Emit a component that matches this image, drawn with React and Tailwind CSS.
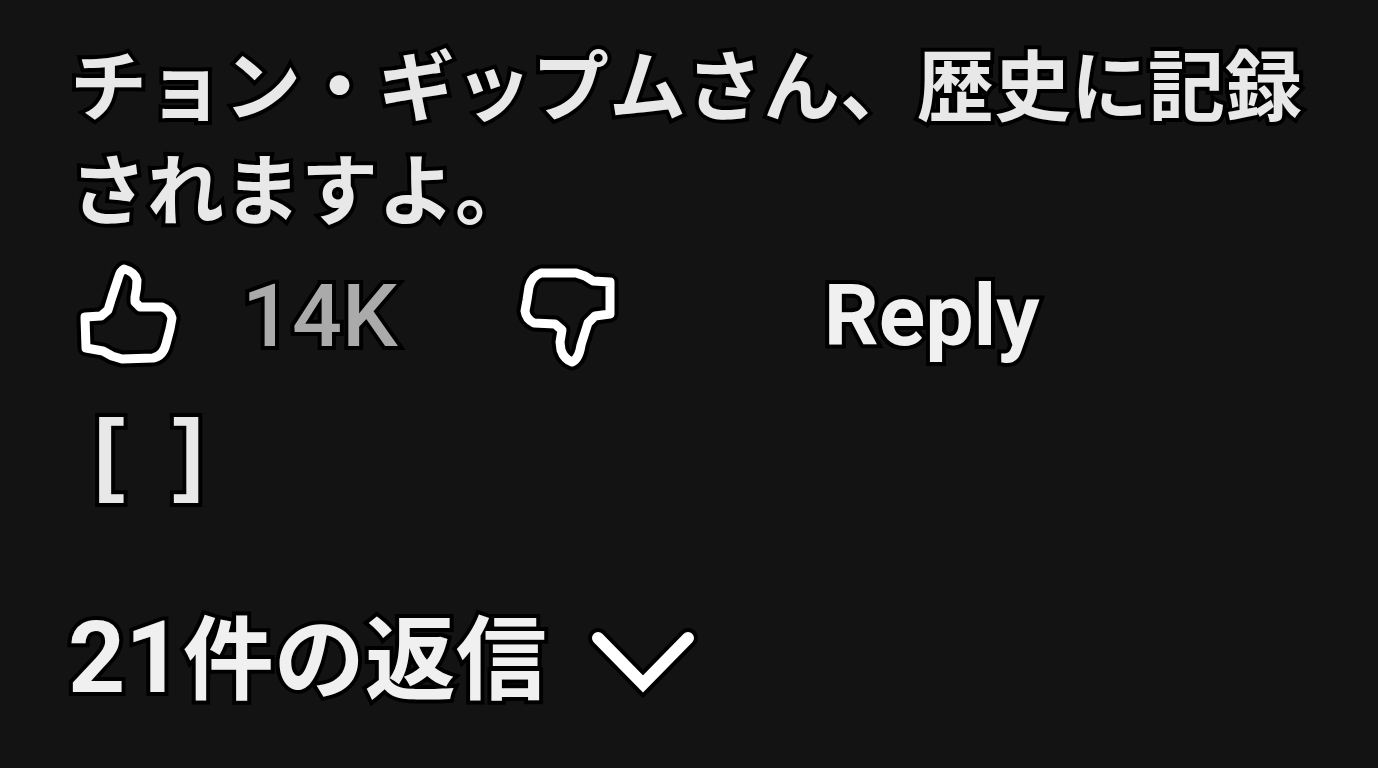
import React from "react";

const OUTLINE = "[-webkit-text-stroke:8px_black] [paint-order:stroke_fill]";

function OutlinedPath({ d, width = 9 }) {
  return (
    <>
      <path d={d} stroke="black" strokeWidth={width + 8} />
      <path d={d} stroke="white" strokeWidth={width} />
    </>
  );
}

function ThumbUpIcon() {
  return (
    <svg
      aria-hidden="true"
      className="h-28 w-26 overflow-visible"
      viewBox="0 0 104 112"
      fill="none"
      strokeLinejoin="round"
    >
      <OutlinedPath d="M11 57L27 56L34 50L38 37L44 19Q46 11 50 9Q61 12 63 20Q63 29 61 37L61 42L66 47L88 47Q96 50 98 58L96 69L92 84Q89 96 79 98L48 99L38 96L29 91L12 88Z" />
    </svg>
  );
}

function ThumbDownIcon() {
  return (
    <svg
      aria-hidden="true"
      className="h-28 w-26 overflow-visible"
      viewBox="0 0 104 112"
      fill="none"
      strokeLinejoin="round"
    >
      <OutlinedPath d="M25 13L60 13L69 16L77 21L94 22L94 54L79 56L72 63L65 85Q63 99 56 102Q48 99 45 90L44 82L46 70L39 64L18 63Q10 59 9 51L11 40L13 27Q16 16 25 13Z" />
    </svg>
  );
}

function ChevronIcon() {
  return (
    <svg
      aria-hidden="true"
      className="h-20 w-28 overflow-visible"
      viewBox="0 0 112 80"
      fill="none"
      strokeLinecap="round"
    >
      <OutlinedPath d="M11 18L56 64L101 18" width={12} />
    </svg>
  );
}

export default function App() {
  return (
    <main className="min-h-screen bg-[#131313] px-[70px] pt-[30px] pb-7 font-['Roboto','Noto_Sans_CJK_JP',sans-serif] text-[#e8e8e8]">
      <p
        lang="ja"
        className={`font-['Noto_Sans_CJK_JP',sans-serif] text-[77px] leading-[104px] font-bold ${OUTLINE}`}
      >
        チョン・ギップムさん、歴史に記録されますよ。
      </p>

      <div className="mt-[22px] flex items-center">
        <button type="button" aria-label="Like" className="ml-1">
          <ThumbUpIcon />
        </button>
        <span className={`ml-16 text-[88px] leading-[112px] font-medium text-[#aaaaaa] ${OUTLINE}`}>
          14K
        </span>
        <button type="button" aria-label="Dislike" className="ml-[118px]">
          <ThumbDownIcon />
        </button>
        <button
          type="button"
          className={`ml-[204px] text-[86px] leading-[112px] font-bold text-[#f0f0f0] ${OUTLINE}`}
        >
          Reply
        </button>
      </div>

      <div
        className={`mt-6 ml-6 flex gap-12 font-['Liberation_Sans',sans-serif] text-[92px] leading-[112px] font-bold ${OUTLINE}`}
      >
        <span>[</span>
        <span>]</span>
      </div>

      <button type="button" className="mt-[90px] -ml-0.5 flex items-center gap-10">
        <span
          lang="ja"
          className={`text-[91px] leading-[120px] font-bold text-[#f0f0f0] ${OUTLINE}`}
        >
          <span className="text-[100px]">21</span>件の返信
        </span>
        <ChevronIcon />
      </button>
    </main>
  );
}
